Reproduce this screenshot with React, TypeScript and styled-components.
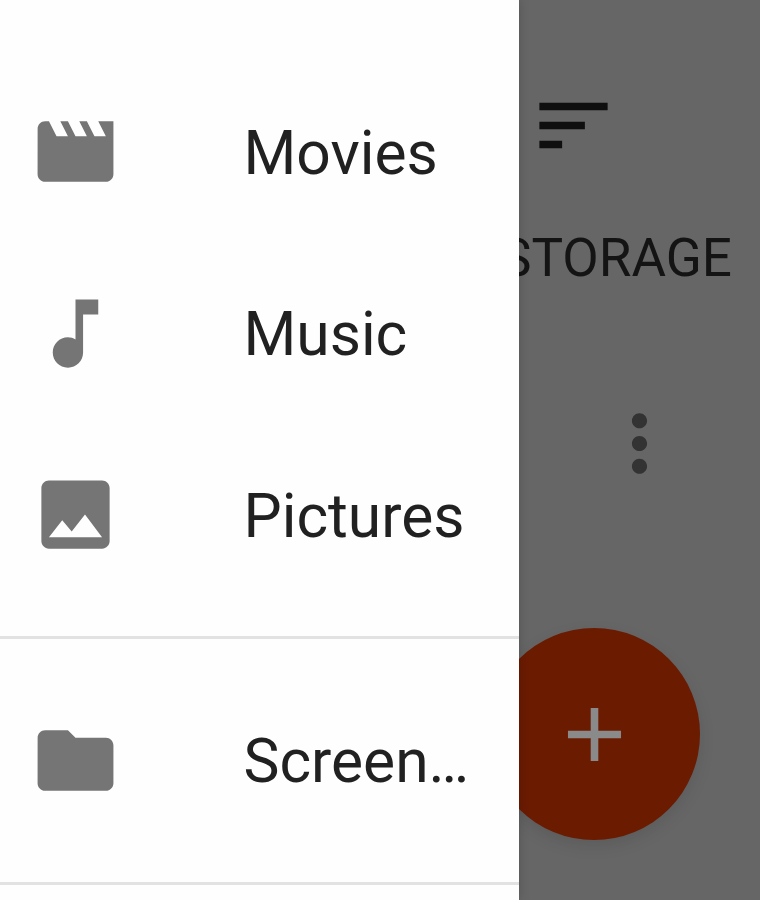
import React from "react";
import styled, { createGlobalStyle } from "styled-components";

const Global = createGlobalStyle`
  html, body { margin: 0; padding: 0; background: #666666; }
  * { box-sizing: border-box; }
`;

const Page = styled.div`
  display: flex;
  width: 760px;
  height: 900px;
  overflow: hidden;
  font-family: Roboto, "Liberation Sans", sans-serif;
`;

const Drawer = styled.nav`
  position: relative;
  z-index: 1;
  flex: 0 0 519px;
  display: flex;
  flex-direction: column;
  background: #fefefe;
  padding-top: 61px;
  box-shadow: 0 0 10px rgba(0, 0, 0, 0.18);
`;

const Section = styled.div<{ $first?: boolean }>`
  display: flex;
  flex-direction: column;
  padding: ${(p) => (p.$first ? "0 0 30px" : "31px 0 31px")};
  border-bottom: 3px solid #e2e2e2;
`;

const Row = styled.div`
  display: flex;
  align-items: center;
  height: 181.5px;
  padding-left: 30px;
  gap: 122.5px;
  min-width: 0;
`;

const DrawerIcon = styled.svg`
  flex: 0 0 91px;
  width: 91px;
  height: 91px;
  fill: #757575;
`;

const Label = styled.span`
  width: 232px;
  margin-top: 4px;
  font-size: 60.5px;
  line-height: 70px;
  color: #212121;
  white-space: nowrap;
  overflow: hidden;
  text-overflow: ellipsis;
`;

const Backdrop = styled.main`
  position: relative;
  flex: 1;
  min-width: 0;
  display: flex;
  flex-direction: column;
  background: #666666;
  overflow: hidden;
`;

const SortIcon = styled.svg`
  flex: none;
  width: 91px;
  height: 91px;
  margin: 79.5px 0 0 9px;
  fill: #0f0f0f;
`;

const TabRow = styled.div`
  display: flex;
  justify-content: flex-end;
  margin-top: 56px;
  padding-right: 28px;
`;

const TabLabel = styled.span`
  font-size: 53px;
  line-height: 62px;
  color: #141414;
  white-space: nowrap;
`;

const MoreIcon = styled.svg`
  flex: none;
  width: 91px;
  height: 91px;
  margin: 109.5px 0 0 75px;
  fill: #333333;
`;

const Fab = styled.button`
  position: absolute;
  left: -31px;
  top: 628px;
  width: 212px;
  height: 212px;
  padding: 0;
  border: none;
  border-radius: 50%;
  background: #6b1b00;
  box-shadow: 0 6px 16px rgba(0, 0, 0, 0.1);
  display: flex;
  align-items: center;
  justify-content: center;
`;

const FabIcon = styled.svg`
  width: 91px;
  height: 91px;
  fill: #8a8a8a;
`;

const paths = {
  movie:
    "M18 4l2 4h-3l-2-4h-2l2 4h-3l-2-4H8l2 4H7L5 4H4c-1.1 0-1.99.9-1.99 2L2 18c0 1.1.9 2 2 2h16c1.1 0 2-.9 2-2V4h-4z",
  music:
    "M12 3v10.55c-.59-.34-1.27-.55-2-.55-2.21 0-4 1.79-4 4s1.79 4 4 4 4-1.79 4-4V7h4V3h-6z",
  image:
    "M21 19V5c0-1.1-.9-2-2-2H5c-1.1 0-2 .9-2 2v14c0 1.1.9 2 2 2h14c1.1 0 2-.9 2-2zM8.5 13.5l2.5 3.01L14.5 12l4.5 6H5l3.5-4.5z",
  folder:
    "M10 4H4c-1.1 0-1.99.9-1.99 2L2 18c0 1.1.9 2 2 2h16c1.1 0 2-.9 2-2V8c0-1.1-.9-2-2-2h-8l-2-2z",
};

const NavRow = ({ d, label }: { d: string; label: string }) => (
  <Row>
    <DrawerIcon viewBox="0 0 24 24">
      <path d={d} />
    </DrawerIcon>
    <Label>{label}</Label>
  </Row>
);

export default function App() {
  return (
    <Page>
      <Global />
      <Drawer>
        <Section $first>
          <NavRow d={paths.movie} label="Movies" />
          <NavRow d={paths.music} label="Music" />
          <NavRow d={paths.image} label="Pictures" />
        </Section>
        <Section>
          <NavRow d={paths.folder} label="Screenshots" />
        </Section>
      </Drawer>
      <Backdrop>
        <SortIcon viewBox="0 0 24 24">
          <path d="M3 18h6v-2H3v2zM3 6v2h18V6H3zm0 7h12v-2H3v2z" />
        </SortIcon>
        <TabRow>
          <TabLabel>STORAGE</TabLabel>
        </TabRow>
        <MoreIcon viewBox="0 0 24 24">
          <path d="M12 8c1.1 0 2-.9 2-2s-.9-2-2-2-2 .9-2 2 .9 2 2 2zm0 2c-1.1 0-2 .9-2 2s.9 2 2 2 2-.9 2-2-.9-2-2-2zm0 6c-1.1 0-2 .9-2 2s.9 2 2 2 2-.9 2-2-.9-2-2-2z" />
        </MoreIcon>
        <Fab aria-label="Add">
          <FabIcon viewBox="0 0 24 24">
            <path d="M19 13h-6v6h-2v-6H5v-2h6V5h2v6h6v2z" />
          </FabIcon>
        </Fab>
      </Backdrop>
    </Page>
  );
}
